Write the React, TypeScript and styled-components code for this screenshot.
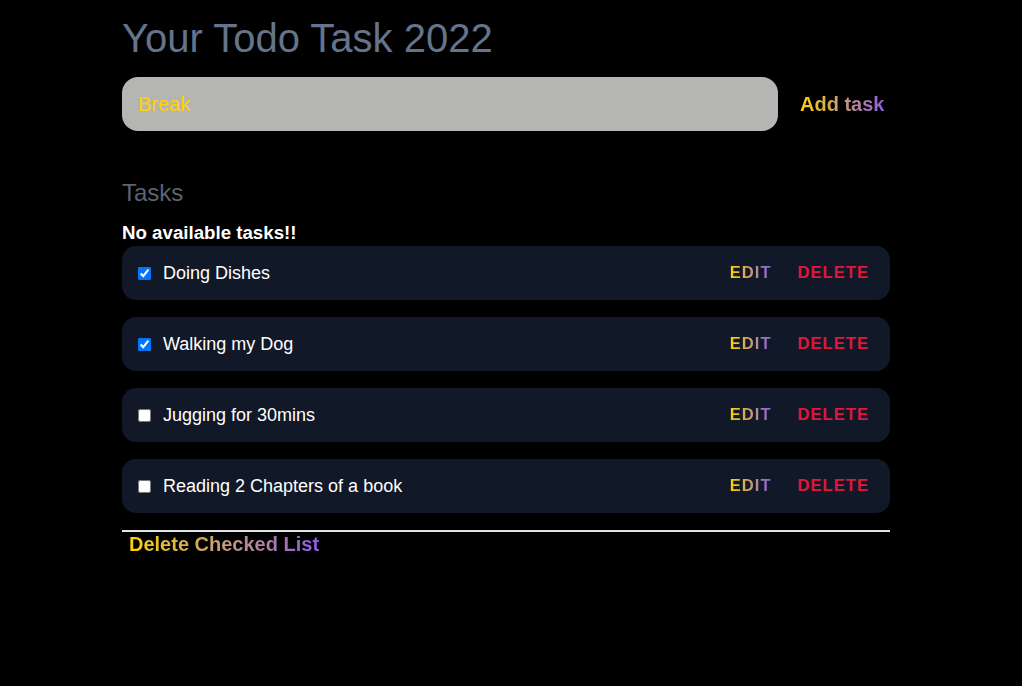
import * as React from 'react';
import styled, { createGlobalStyle, css } from 'styled-components';

const GlobalStyle = createGlobalStyle`
  body {
    margin: 0;
    background: #000;
    font-family: 'Liberation Sans', Arial, sans-serif;
  }
`;

const gradientText = css`
  background: linear-gradient(90deg, #ffd200 0%, #c9a16a 45%, #8e5ce6 100%);
  -webkit-background-clip: text;
  background-clip: text;
  color: transparent;
`;

const Page = styled.main`
  width: 768px;
  margin: 0 0 0 122px;
  padding-top: 14px;
`;

const Title = styled.h1`
  margin: 0;
  font-size: 40px;
  font-weight: 400;
  color: #64748b;
  line-height: 48px;
`;

const Form = styled.form`
  display: flex;
  align-items: center;
  margin-top: 15px;
`;

const Input = styled.input`
  width: 656px;
  height: 54px;
  box-sizing: border-box;
  border: none;
  border-radius: 16px;
  background: #b5b5b3;
  padding: 0 16px;
  font-family: inherit;
  font-size: 20px;
  color: #ffd200;
  outline: none;
`;

const AddButton = styled.button`
  margin-left: 22px;
  border: none;
  padding: 0;
  cursor: pointer;
  font-family: inherit;
  font-size: 20px;
  font-weight: 700;
  ${gradientText}
`;

const SectionTitle = styled.h2`
  margin: 48px 0 0;
  font-size: 24px;
  font-weight: 400;
  color: #5b6375;
  line-height: 28px;
`;

const Empty = styled.p`
  margin: 16px 0 3px;
  font-size: 18.7px;
  font-weight: 700;
  color: #fff;
  line-height: 20px;
`;

const List = styled.ul`
  list-style: none;
  margin: 0;
  padding: 0;
  display: flex;
  flex-direction: column;
  gap: 17px;
`;

const Row = styled.li`
  display: flex;
  align-items: center;
  height: 54px;
  border-radius: 14px;
  background: #111827;
  padding: 0 21px 0 16px;
`;

const Check = styled.input`
  width: 13px;
  height: 13px;
  margin: 0 12px 0 0;
`;

const Label = styled.span`
  flex: 1;
  font-size: 18px;
  color: #fff;
`;

const ActionButton = styled.button<{ $danger?: boolean }>`
  border: none;
  background: none;
  padding: 0;
  cursor: pointer;
  font-family: inherit;
  font-size: 16.6px;
  font-weight: 700;
  letter-spacing: 1px;
  ${(p) =>
    p.$danger
      ? css`
          color: #e0163f;
          margin-left: 26px;
        `
      : gradientText}
`;

const Divider = styled.hr`
  margin: 17px 0 0;
  border: none;
  border-top: 2px solid #e5e5e5;
`;

const ClearButton = styled.button`
  margin-top: 1px;
  margin-left: 7px;
  border: none;
  padding: 0;
  cursor: pointer;
  font-family: inherit;
  font-size: 20px;
  font-weight: 700;
  ${gradientText}
`;

const tasks = [
  { id: 1, text: 'Doing Dishes', done: true },
  { id: 2, text: 'Walking my Dog', done: true },
  { id: 3, text: 'Jugging for 30mins', done: false },
  { id: 4, text: 'Reading 2 Chapters of a book', done: false },
];

export default function App() {
  const [items, setItems] = React.useState(tasks);
  const [value, setValue] = React.useState('Break');

  return (
    <>
      <GlobalStyle />
      <Page>
        <Title>Your Todo Task 2022</Title>
        <Form onSubmit={(e) => e.preventDefault()}>
          <Input value={value} onChange={(e) => setValue(e.target.value)} />
          <AddButton type="submit">Add task</AddButton>
        </Form>
        <SectionTitle>Tasks</SectionTitle>
        <Empty>No available tasks!!</Empty>
        <List>
          {items.map((t) => (
            <Row key={t.id}>
              <Check
                type="checkbox"
                checked={t.done}
                onChange={() =>
                  setItems(items.map((i) => (i.id === t.id ? { ...i, done: !i.done } : i)))
                }
              />
              <Label>{t.text}</Label>
              <ActionButton type="button">EDIT</ActionButton>
              <ActionButton type="button" $danger>
                DELETE
              </ActionButton>
            </Row>
          ))}
        </List>
        <Divider />
        <ClearButton type="button">Delete Checked List</ClearButton>
      </Page>
    </>
  );
}
